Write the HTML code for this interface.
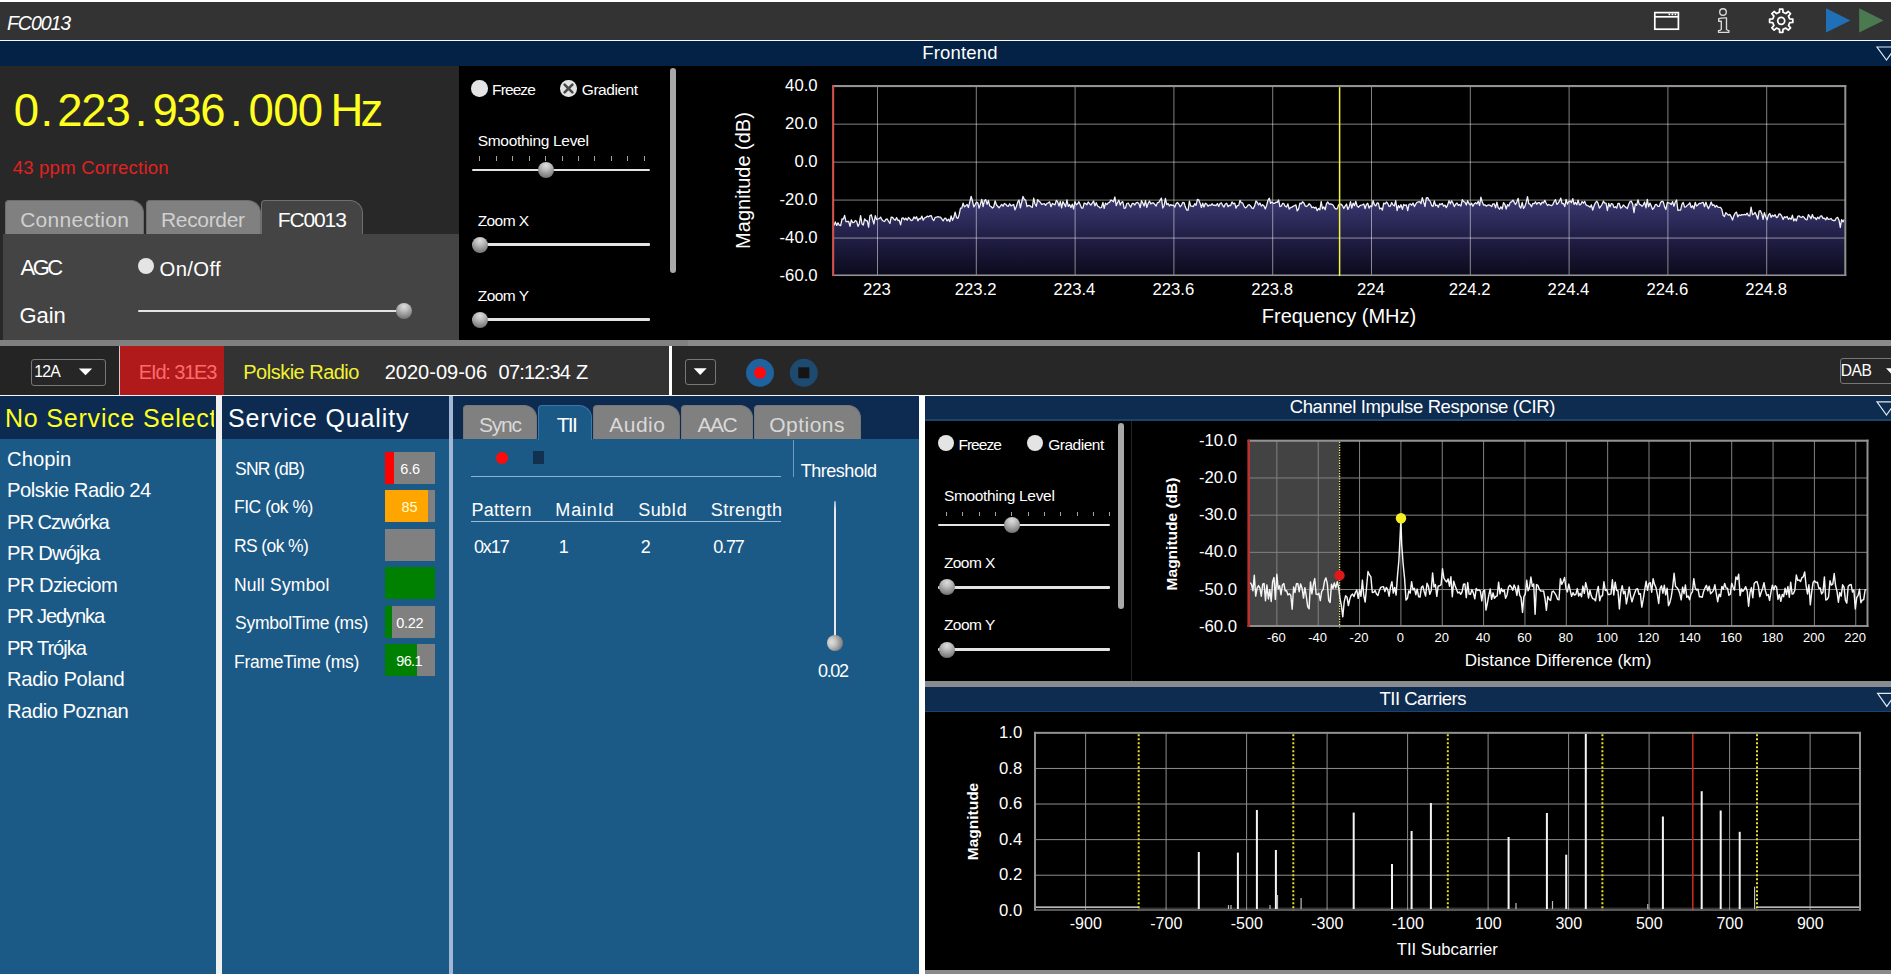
<!DOCTYPE html>
<html lang="en"><head><meta charset="utf-8"><title>FC0013</title>
<style>
html,body{margin:0;padding:0;background:#000;}
body{width:1891px;height:974px;position:relative;overflow:hidden;font-family:"Liberation Sans", sans-serif;color:#fff;}
.b{position:absolute;}
.t{position:absolute;white-space:pre;line-height:1;}
svg{position:absolute;left:0;top:0;overflow:visible;}
svg text{font-family:"Liberation Sans", sans-serif;fill:#fff;}
.trk{position:absolute;height:2.6px;background:#e4e4e4;border-radius:1px;}
.tk{position:absolute;width:1px;background:#a4a4a4;}
.thumb{position:absolute;width:16px;height:16px;border-radius:50%;background:radial-gradient(circle at 50% 22%,#dcdcdc 0%,#bdbdbd 30%,#8c8c8c 65%,#5a5a5a 100%);}
.radio{position:absolute;width:16.5px;height:16.5px;border-radius:50%;background:#e4e4e4;}
.sb{position:absolute;width:6.4px;border-radius:3.2px;background:#a8a8a8;}
.tab{position:absolute;box-sizing:border-box;border:1px solid #6c6c6c;border-bottom:none;border-radius:4px 13px 0 0;background:#808080;}
.bar{position:absolute;left:384.8px;width:50.4px;height:32px;background:#808080;}
.bar i{position:absolute;left:0;top:0;height:100%;display:block;}
.cb{position:absolute;box-sizing:border-box;border:1.3px solid #777;border-radius:3px;background:#262626;}
</style></head><body>
<!-- title bar -->
<div class="b" style="left:0;top:0;width:1891px;height:2px;background:#fff"></div>
<div class="b" style="left:0;top:2px;width:1891px;height:37.6px;background:#333"></div>
<div class="b" style="left:0;top:39.6px;width:1891px;height:1.5px;background:#f4f8ff"></div>
<div class="b" style="left:0;top:41px;width:1891px;height:25px;background:#042246"></div>
<!-- frontend left panel -->
<div class="b" style="left:0;top:66px;width:459px;height:274px;background:#282828"></div>
<div class="tab" style="left:5px;top:200px;width:139px;height:33.8px"></div>
<div class="tab" style="left:146px;top:200px;width:114.5px;height:33.8px"></div>
<div class="tab" style="left:261px;top:200px;width:102px;height:34.5px;background:#444;border-color:#707070"></div>
<div class="b" style="left:3px;top:233.6px;width:456px;height:106.4px;background:#444"></div>
<div class="b" style="left:262px;top:232px;width:100px;height:4px;background:#444"></div>
<div class="radio" style="left:138px;top:258.2px;width:16px;height:16px"></div>
<div class="trk" style="left:138px;top:309.7px;width:263.0px"></div><div class="thumb" style="left:396.0px;top:303.0px"></div>
<!-- frontend controls -->
<div class="radio" style="left:471.2px;top:80.2px"></div>
<div class="radio" style="left:560.2px;top:80.2px"></div>
<svg width="1891" height="974" viewBox="0 0 1891 974" style="pointer-events:none"><path d="M564.6 84.6 L572.4 92.4 M572.4 84.6 L564.6 92.4" stroke="#484848" stroke-width="2.6" stroke-linecap="round" fill="none"/></svg>
<div class="trk" style="left:471.5px;top:168.7px;width:178.7px"></div><div class="tk" style="left:479px;top:156.3px;height:5.0px"></div><div class="tk" style="left:496px;top:156.3px;height:5.0px"></div><div class="tk" style="left:512px;top:156.3px;height:5.0px"></div><div class="tk" style="left:529px;top:156.3px;height:5.0px"></div><div class="tk" style="left:545px;top:156.3px;height:5.0px"></div><div class="tk" style="left:562px;top:156.3px;height:5.0px"></div><div class="tk" style="left:578px;top:156.3px;height:5.0px"></div><div class="tk" style="left:594px;top:156.3px;height:5.0px"></div><div class="tk" style="left:611px;top:156.3px;height:5.0px"></div><div class="tk" style="left:627px;top:156.3px;height:5.0px"></div><div class="tk" style="left:644px;top:156.3px;height:5.0px"></div><div class="thumb" style="left:537.5px;top:162.0px"></div>
<div class="trk" style="left:471.5px;top:243.3px;width:178.7px"></div><div class="thumb" style="left:472.2px;top:236.6px"></div>
<div class="trk" style="left:471.5px;top:318.4px;width:178.7px"></div><div class="thumb" style="left:472.2px;top:311.7px"></div>
<div class="sb" style="left:670px;top:68px;height:205px"></div>
<!-- separators -->
<div class="b" style="left:0;top:339.8px;width:688px;height:6.4px;background:#808080"></div>
<div class="b" style="left:688px;top:339.8px;width:1203px;height:6.4px;background:#8a8a8a"></div>
<!-- status bar -->
<div class="b" style="left:0;top:346.2px;width:119.5px;height:49px;background:#242424"></div>
<div class="b" style="left:119px;top:346.2px;width:1.2px;height:49px;background:#e4c4c4"></div>
<div class="b" style="left:120.2px;top:346.2px;width:103.8px;height:49px;background:#b01a1a"></div>
<div class="b" style="left:224px;top:346.2px;width:445px;height:49px;background:#333"></div>
<div class="b" style="left:669px;top:346.2px;width:3px;height:49px;background:#fff"></div>
<div class="b" style="left:672px;top:346.2px;width:1219px;height:49px;background:#272727"></div>
<div class="b" style="left:0;top:394.8px;width:1891px;height:1.5px;background:#f4f8ff"></div>
<div class="cb" style="left:31px;top:359.4px;width:75px;height:26.4px;background:#262626"></div>
<div class="cb" style="left:685px;top:359px;width:30.8px;height:26.2px"></div>
<div class="cb" style="left:1839.6px;top:357.5px;width:70px;height:26.4px"></div>
<svg width="1891" height="974" viewBox="0 0 1891 974">
<path d="M78.8 368.4 h13.4 l-6.7 6.8z" fill="#fff"/>
<path d="M693.7 368.2 h13 l-6.5 6.8z" fill="#fff"/>
<path d="M1886 368.2 h13 l-6.5 6.8z" fill="#fff"/>
<circle cx="760" cy="372.8" r="14" fill="#1f62a0"/><circle cx="760" cy="372.8" r="6" fill="#ff0a0a"/>
<circle cx="803.8" cy="372.8" r="14" fill="#1e4a70"/><rect x="798.3" y="367.3" width="11" height="11" fill="#141414"/>
</svg>
<!-- bottom-left panels -->
<div class="b" style="left:0;top:396.3px;width:919px;height:577.7px;background:#1b5986"></div>
<div class="b" style="left:0;top:396.3px;width:919px;height:42.5px;background:#0d2b50"></div>
<div class="b" style="left:216.2px;top:396.3px;width:6px;height:577.7px;background:#f0f0f0"></div>
<div class="b" style="left:449px;top:396.3px;width:4.3px;height:577.7px;background:#a2b6d6"></div>
<div class="b" style="left:919px;top:396.3px;width:6px;height:577.7px;background:#fff"></div>
<div class="bar" style="top:452.0px"><i style="width:9.2px;background:#ff0000"></i></div>
<div class="bar" style="top:490.4px"><i style="width:43.6px;background:#ffa500"></i></div>
<div class="bar" style="top:528.9px"></div>
<div class="bar" style="top:567.3px"><i style="width:50.4px;background:#008000"></i></div>
<div class="bar" style="top:605.7px"><i style="width:7.0px;background:#008000"></i></div>
<div class="bar" style="top:644.0px"><i style="width:32.0px;background:#008000"></i></div>
<div class="tab" style="left:463px;top:405px;width:73.5px;height:33.8px;border-color:#777"></div>
<div class="tab" style="left:538px;top:405px;width:54px;height:34.5px;background:#1b5986;border-color:#3a78aa"></div>
<div class="tab" style="left:593px;top:405px;width:87px;height:33.8px;border-color:#777"></div>
<div class="tab" style="left:681px;top:405px;width:72px;height:33.8px;border-color:#777"></div>
<div class="tab" style="left:754px;top:405px;width:107px;height:33.8px;border-color:#777"></div>

<div class="b" style="left:495.9px;top:451.7px;width:12px;height:12px;border-radius:50%;background:#ff0a0a"></div>
<div class="b" style="left:532.9px;top:451px;width:10.8px;height:13px;background:#12304f"></div>
<div class="b" style="left:470.8px;top:476px;width:310.5px;height:1.2px;background:#8fb2d2"></div>
<div class="b" style="left:470.8px;top:520.8px;width:310.5px;height:1.2px;background:#9db9d4"></div>
<div class="b" style="left:792.6px;top:440px;width:1px;height:37px;background:#6f9cc4"></div>
<div class="b" style="left:833.5px;top:500.5px;width:2.4px;height:142px;background:linear-gradient(#8fb0cc,#e8e8e8 6%,#e8e8e8);border-radius:1.2px 1.2px 0 0"></div>
<div class="thumb" style="left:827.1px;top:634.8px;background:radial-gradient(circle at 28% 45%,#e0e0e0 0%,#c4c4c4 30%,#8c8c8c 68%,#5a5a5a 100%)"></div>
<!-- right panels -->
<div class="b" style="left:925px;top:396.3px;width:966px;height:24.5px;background:#0e2c50"></div>
<div class="b" style="left:925px;top:419.4px;width:966px;height:1.4px;background:#1a446e"></div>
<div class="b" style="left:925px;top:420.8px;width:966px;height:260.2px;background:#000"></div>
<div class="b" style="left:1131px;top:421px;width:1px;height:260px;background:#242424"></div>
<div class="b" style="left:925px;top:681px;width:966px;height:6.2px;background:#868c90"></div>
<div class="b" style="left:925px;top:687.2px;width:966px;height:25.2px;background:#0e2c50"></div>
<div class="b" style="left:925px;top:711px;width:966px;height:1.4px;background:#1a446e"></div>
<div class="b" style="left:925px;top:712.4px;width:966px;height:258px;background:#000"></div>
<div class="b" style="left:925px;top:970.3px;width:966px;height:4px;background:#8a8a8a"></div>
<div class="radio" style="left:938px;top:435.3px;width:16px;height:16px"></div>
<div class="radio" style="left:1027px;top:435.3px;width:16px;height:16px"></div>
<div class="trk" style="left:938.2px;top:523.5px;width:171.9px"></div><div class="tk" style="left:946px;top:511.7px;height:4.5px"></div><div class="tk" style="left:962px;top:511.7px;height:4.5px"></div><div class="tk" style="left:979px;top:511.7px;height:4.5px"></div><div class="tk" style="left:995px;top:511.7px;height:4.5px"></div><div class="tk" style="left:1011px;top:511.7px;height:4.5px"></div><div class="tk" style="left:1028px;top:511.7px;height:4.5px"></div><div class="tk" style="left:1044px;top:511.7px;height:4.5px"></div><div class="tk" style="left:1060px;top:511.7px;height:4.5px"></div><div class="tk" style="left:1077px;top:511.7px;height:4.5px"></div><div class="tk" style="left:1093px;top:511.7px;height:4.5px"></div><div class="tk" style="left:1109px;top:511.7px;height:4.5px"></div><div class="thumb" style="left:1003.9px;top:516.8px"></div>
<div class="trk" style="left:938.2px;top:586.0px;width:171.9px"></div><div class="thumb" style="left:938.6px;top:579.3px"></div>
<div class="trk" style="left:938.2px;top:648.2px;width:171.9px"></div><div class="thumb" style="left:938.6px;top:641.5px"></div>
<div class="sb" style="left:1117.7px;top:423px;height:186px"></div>
<!-- charts -->
<svg width="1891" height="974" viewBox="0 0 1891 974">
<g id="frontend-chart"><defs><linearGradient id="fg" x1="0" y1="198" x2="0" y2="276.0" gradientUnits="userSpaceOnUse"><stop offset="0" stop-color="#3b3972"/><stop offset="0.5" stop-color="#211f46"/><stop offset="1" stop-color="#0b0a1c"/></linearGradient></defs><polygon points="833.2,276.0 834.0,225.4 835.3,221.9 836.7,225.4 838.0,222.9 839.3,225.2 840.7,225.6 842.0,219.0 843.3,219.2 844.6,215.4 846.0,221.6 847.3,221.5 848.6,221.3 850.0,226.3 851.3,219.8 852.6,222.6 854.0,222.4 855.3,220.5 856.6,221.2 858.0,226.4 859.3,223.7 860.6,215.6 862.0,223.9 863.3,225.1 864.6,218.8 865.9,220.5 867.3,220.8 868.6,227.2 869.9,215.7 871.3,214.8 872.6,219.6 873.9,224.0 875.3,215.6 876.6,219.5 877.9,219.0 879.3,218.6 880.6,217.1 881.9,219.7 883.3,221.1 884.6,221.5 885.9,219.3 887.2,219.0 888.6,221.5 889.9,223.5 891.2,217.2 892.6,217.5 893.9,219.2 895.2,220.2 896.6,217.6 897.9,220.5 899.2,220.2 900.6,224.9 901.9,218.1 903.2,217.8 904.5,219.8 905.9,218.2 907.2,220.2 908.5,217.4 909.9,218.9 911.2,220.5 912.5,220.2 913.9,216.9 915.2,218.5 916.5,216.8 917.9,220.8 919.2,218.6 920.5,219.0 921.9,216.1 923.2,220.2 924.5,218.0 925.8,217.4 927.2,216.2 928.5,216.8 929.8,215.9 931.2,215.6 932.5,219.1 933.8,220.6 935.2,217.3 936.5,217.1 937.8,216.6 939.2,217.1 940.5,217.2 941.8,219.0 943.1,220.9 944.5,218.5 945.8,218.2 947.1,220.9 948.5,219.2 949.8,221.6 951.1,216.0 952.5,220.3 953.8,217.8 955.1,212.2 956.5,217.4 957.8,218.4 959.1,214.9 960.5,208.1 961.8,208.2 963.1,203.1 964.4,206.8 965.8,205.8 967.1,204.5 968.4,207.5 969.8,201.9 971.1,196.3 972.4,200.7 973.8,206.8 975.1,204.8 976.4,202.2 977.8,202.9 979.1,208.1 980.4,204.1 981.8,199.3 983.1,206.7 984.4,200.8 985.7,199.6 987.1,204.3 988.4,200.5 989.7,205.9 991.1,206.5 992.4,208.1 993.7,206.9 995.1,200.8 996.4,204.7 997.7,206.2 999.1,207.8 1000.4,206.2 1001.7,204.4 1003.0,206.2 1004.4,203.5 1005.7,204.3 1007.0,205.8 1008.4,206.3 1009.7,203.8 1011.0,205.8 1012.4,205.1 1013.7,204.5 1015.0,209.8 1016.4,206.5 1017.7,202.1 1019.0,200.0 1020.4,207.8 1021.7,202.0 1023.0,196.5 1024.3,199.2 1025.7,200.3 1027.0,206.5 1028.3,205.4 1029.7,205.6 1031.0,206.7 1032.3,207.4 1033.7,198.1 1035.0,204.0 1036.3,206.3 1037.7,199.7 1039.0,201.2 1040.3,202.3 1041.7,204.3 1043.0,204.0 1044.3,203.6 1045.6,205.3 1047.0,203.3 1048.3,202.8 1049.6,201.9 1051.0,206.7 1052.3,203.4 1053.6,204.2 1055.0,204.9 1056.3,200.4 1057.6,201.7 1059.0,206.1 1060.3,201.4 1061.6,207.8 1062.9,201.7 1064.3,204.1 1065.6,206.7 1066.9,200.0 1068.3,206.4 1069.6,204.5 1070.9,207.6 1072.3,204.2 1073.6,209.0 1074.9,201.6 1076.3,204.8 1077.6,203.8 1078.9,201.7 1080.3,205.1 1081.6,208.1 1082.9,208.2 1084.2,203.0 1085.6,203.5 1086.9,204.8 1088.2,202.0 1089.6,203.7 1090.9,205.1 1092.2,203.1 1093.6,201.0 1094.9,205.9 1096.2,202.7 1097.6,206.0 1098.9,206.7 1100.2,207.9 1101.5,207.5 1102.9,202.5 1104.2,208.4 1105.5,203.1 1106.9,204.6 1108.2,202.8 1109.5,202.4 1110.9,200.0 1112.2,200.8 1113.5,201.8 1114.9,197.0 1116.2,205.7 1117.5,202.5 1118.9,200.3 1120.2,205.0 1121.5,202.3 1122.8,201.7 1124.2,208.4 1125.5,208.0 1126.8,203.5 1128.2,203.0 1129.5,205.3 1130.8,207.0 1132.2,203.5 1133.5,203.5 1134.8,205.0 1136.2,202.9 1137.5,202.4 1138.8,203.4 1140.2,207.7 1141.5,200.7 1142.8,203.0 1144.1,206.0 1145.5,200.7 1146.8,207.3 1148.1,203.5 1149.5,201.1 1150.8,203.9 1152.1,203.0 1153.5,202.8 1154.8,204.5 1156.1,206.0 1157.5,202.6 1158.8,202.3 1160.1,200.1 1161.4,198.1 1162.8,208.0 1164.1,205.7 1165.4,198.5 1166.8,204.7 1168.1,203.5 1169.4,205.9 1170.8,204.6 1172.1,205.4 1173.4,205.1 1174.8,207.1 1176.1,203.8 1177.4,202.5 1178.8,204.0 1180.1,206.8 1181.4,205.4 1182.7,202.5 1184.1,202.7 1185.4,207.1 1186.7,210.1 1188.1,210.1 1189.4,201.2 1190.7,206.1 1192.1,206.2 1193.4,206.5 1194.7,203.7 1196.1,205.2 1197.4,199.3 1198.7,199.8 1200.1,203.2 1201.4,207.5 1202.7,203.2 1204.0,207.0 1205.4,203.2 1206.7,204.0 1208.0,206.2 1209.4,205.0 1210.7,205.5 1212.0,203.8 1213.4,205.4 1214.7,205.1 1216.0,205.6 1217.4,203.5 1218.7,206.4 1220.0,203.5 1221.3,202.8 1222.7,205.5 1224.0,207.1 1225.3,204.0 1226.7,203.3 1228.0,206.7 1229.3,205.3 1230.7,205.5 1232.0,201.9 1233.3,203.8 1234.7,203.1 1236.0,208.2 1237.3,205.6 1238.7,205.4 1240.0,200.4 1241.3,202.7 1242.6,203.0 1244.0,206.1 1245.3,207.9 1246.6,207.2 1248.0,205.2 1249.3,204.7 1250.6,205.9 1252.0,208.2 1253.3,208.5 1254.6,205.9 1256.0,201.0 1257.3,202.5 1258.6,204.9 1259.9,203.0 1261.3,206.1 1262.6,204.7 1263.9,205.8 1265.3,208.9 1266.6,205.5 1267.9,200.5 1269.3,198.2 1270.6,203.4 1271.9,201.9 1273.3,203.4 1274.6,203.3 1275.9,202.2 1277.3,202.4 1278.6,200.0 1279.9,206.5 1281.2,206.2 1282.6,203.5 1283.9,203.7 1285.2,206.2 1286.6,207.0 1287.9,203.8 1289.2,209.0 1290.6,207.6 1291.9,207.1 1293.2,206.2 1294.6,205.6 1295.9,204.9 1297.2,210.9 1298.6,208.8 1299.9,203.1 1301.2,203.9 1302.5,201.8 1303.9,202.9 1305.2,205.9 1306.5,206.5 1307.9,205.5 1309.2,203.7 1310.5,204.9 1311.9,207.7 1313.2,207.0 1314.5,208.1 1315.9,207.2 1317.2,210.7 1318.5,208.5 1319.8,209.9 1321.2,201.5 1322.5,208.6 1323.8,206.9 1325.2,209.7 1326.5,203.7 1327.8,202.0 1329.2,204.1 1330.5,203.8 1331.8,204.3 1333.2,205.3 1334.5,207.8 1335.8,209.0 1337.2,208.9 1338.5,205.1 1339.8,204.1 1341.1,204.2 1342.5,205.8 1343.8,208.5 1345.1,206.1 1346.5,204.0 1347.8,209.3 1349.1,207.2 1350.5,201.6 1351.8,208.1 1353.1,203.1 1354.5,205.6 1355.8,201.3 1357.1,206.0 1358.5,207.2 1359.8,205.7 1361.1,205.2 1362.4,204.8 1363.8,204.0 1365.1,208.6 1366.4,204.5 1367.8,203.3 1369.1,208.2 1370.4,205.9 1371.8,206.6 1373.1,200.7 1374.4,204.7 1375.8,205.9 1377.1,203.0 1378.4,203.2 1379.7,208.8 1381.1,208.0 1382.4,210.1 1383.7,203.1 1385.1,203.9 1386.4,202.0 1387.7,203.5 1389.1,206.5 1390.4,206.1 1391.7,202.6 1393.1,205.0 1394.4,205.9 1395.7,200.7 1397.1,210.5 1398.4,205.5 1399.7,207.6 1401.0,204.6 1402.4,209.4 1403.7,204.4 1405.0,205.5 1406.4,204.9 1407.7,210.7 1409.0,204.3 1410.4,203.9 1411.7,205.3 1413.0,203.0 1414.4,206.6 1415.7,204.2 1417.0,202.3 1418.4,201.8 1419.7,201.6 1421.0,203.6 1422.3,197.6 1423.7,202.1 1425.0,206.6 1426.3,197.8 1427.7,197.6 1429.0,200.1 1430.3,201.4 1431.7,205.6 1433.0,206.4 1434.3,201.0 1435.7,205.7 1437.0,205.0 1438.3,207.3 1439.6,203.8 1441.0,204.6 1442.3,203.4 1443.6,206.2 1445.0,205.1 1446.3,207.6 1447.6,205.1 1449.0,200.7 1450.3,203.8 1451.6,200.8 1453.0,203.2 1454.3,206.6 1455.6,204.3 1457.0,203.0 1458.3,205.4 1459.6,204.6 1460.9,206.0 1462.3,199.6 1463.6,201.5 1464.9,202.1 1466.3,205.1 1467.6,200.7 1468.9,203.5 1470.3,205.0 1471.6,203.2 1472.9,206.3 1474.3,203.7 1475.6,202.7 1476.9,203.9 1478.2,201.3 1479.6,205.5 1480.9,197.2 1482.2,201.8 1483.6,205.0 1484.9,204.8 1486.2,206.1 1487.6,205.2 1488.9,204.8 1490.2,205.3 1491.6,206.6 1492.9,203.9 1494.2,203.8 1495.6,207.9 1496.9,202.1 1498.2,207.6 1499.5,209.2 1500.9,206.8 1502.2,209.0 1503.5,202.6 1504.9,204.5 1506.2,209.0 1507.5,204.7 1508.9,206.0 1510.2,202.4 1511.5,201.9 1512.9,200.1 1514.2,202.2 1515.5,204.5 1516.9,201.7 1518.2,198.3 1519.5,206.3 1520.8,208.0 1522.2,202.5 1523.5,208.4 1524.8,206.6 1526.2,202.2 1527.5,196.6 1528.8,203.6 1530.2,204.4 1531.5,206.7 1532.8,203.4 1534.2,203.6 1535.5,201.8 1536.8,204.2 1538.1,202.7 1539.5,202.6 1540.8,204.8 1542.1,202.1 1543.5,202.9 1544.8,200.4 1546.1,203.0 1547.5,205.5 1548.8,204.5 1550.1,205.2 1551.5,205.7 1552.8,204.6 1554.1,201.6 1555.5,199.6 1556.8,204.4 1558.1,203.2 1559.4,201.2 1560.8,198.1 1562.1,203.6 1563.4,203.4 1564.8,206.6 1566.1,199.4 1567.4,204.0 1568.8,201.6 1570.1,201.0 1571.4,202.7 1572.8,198.6 1574.1,204.4 1575.4,202.3 1576.8,204.7 1578.1,200.2 1579.4,204.9 1580.7,204.6 1582.1,201.6 1583.4,203.2 1584.7,201.4 1586.1,204.9 1587.4,205.6 1588.7,206.1 1590.1,207.2 1591.4,204.9 1592.7,210.1 1594.1,205.8 1595.4,202.8 1596.7,201.2 1598.0,203.1 1599.4,208.2 1600.7,206.5 1602.0,204.5 1603.4,201.2 1604.7,203.1 1606.0,203.1 1607.4,210.5 1608.7,203.5 1610.0,206.8 1611.4,203.6 1612.7,204.0 1614.0,207.6 1615.4,206.7 1616.7,208.0 1618.0,203.3 1619.3,203.5 1620.7,208.2 1622.0,207.3 1623.3,205.0 1624.7,206.3 1626.0,207.4 1627.3,208.5 1628.7,204.3 1630.0,201.7 1631.3,201.2 1632.7,204.1 1634.0,212.7 1635.3,204.0 1636.6,205.3 1638.0,199.9 1639.3,204.3 1640.6,204.8 1642.0,206.4 1643.3,204.8 1644.6,202.1 1646.0,207.8 1647.3,199.4 1648.6,206.7 1650.0,203.1 1651.3,206.1 1652.6,209.4 1654.0,207.8 1655.3,204.7 1656.6,204.5 1657.9,206.4 1659.3,206.4 1660.6,202.4 1661.9,201.2 1663.3,201.9 1664.6,206.9 1665.9,209.5 1667.3,202.3 1668.6,202.9 1669.9,203.1 1671.3,204.5 1672.6,201.6 1673.9,206.2 1675.3,202.0 1676.6,200.0 1677.9,210.4 1679.2,210.1 1680.6,210.2 1681.9,204.4 1683.2,202.4 1684.6,207.1 1685.9,206.9 1687.2,205.3 1688.6,204.5 1689.9,202.7 1691.2,207.7 1692.6,205.8 1693.9,208.8 1695.2,202.3 1696.5,206.0 1697.9,204.9 1699.2,203.3 1700.5,203.5 1701.9,202.7 1703.2,202.4 1704.5,206.7 1705.9,202.1 1707.2,206.1 1708.5,208.6 1709.9,205.4 1711.2,202.0 1712.5,205.4 1713.9,204.8 1715.2,207.1 1716.5,205.5 1717.8,207.2 1719.2,207.4 1720.5,207.3 1721.8,209.4 1723.2,215.5 1724.5,216.5 1725.8,212.6 1727.2,214.0 1728.5,215.2 1729.8,214.4 1731.2,216.8 1732.5,220.0 1733.8,215.9 1735.2,213.0 1736.5,212.1 1737.8,216.8 1739.1,214.9 1740.5,215.5 1741.8,214.6 1743.1,214.8 1744.5,214.4 1745.8,214.9 1747.1,213.1 1748.5,215.6 1749.8,216.0 1751.1,207.2 1752.5,214.6 1753.8,214.0 1755.1,212.5 1756.4,215.3 1757.8,219.2 1759.1,211.1 1760.4,210.7 1761.8,213.6 1763.1,219.3 1764.4,212.6 1765.8,216.9 1767.1,219.8 1768.4,215.1 1769.8,213.4 1771.1,217.3 1772.4,215.2 1773.8,216.2 1775.1,214.7 1776.4,217.6 1777.7,216.9 1779.1,213.8 1780.4,214.1 1781.7,216.1 1783.1,219.5 1784.4,216.8 1785.7,217.6 1787.1,216.5 1788.4,219.3 1789.7,218.0 1791.1,219.4 1792.4,215.2 1793.7,220.8 1795.0,218.8 1796.4,220.9 1797.7,216.4 1799.0,215.8 1800.4,217.2 1801.7,217.3 1803.0,216.4 1804.4,217.8 1805.7,219.5 1807.0,219.9 1808.4,214.7 1809.7,216.4 1811.0,218.7 1812.4,214.5 1813.7,217.9 1815.0,217.7 1816.3,219.6 1817.7,217.1 1819.0,218.7 1820.3,216.2 1821.7,215.8 1823.0,218.4 1824.3,218.2 1825.7,219.9 1827.0,217.3 1828.3,219.3 1829.7,219.1 1831.0,218.5 1832.3,220.2 1833.7,220.5 1835.0,220.5 1836.3,218.0 1837.6,217.4 1839.0,220.2 1840.3,227.5 1841.6,219.7 1843.0,221.9 1844.3,219.6 1845.3,276.0" fill="url(#fg)"/><rect x="877.00" y="86.20" width="1.0" height="189.80" fill="rgba(255,255,255,0.50)"/><rect x="975.80" y="86.20" width="1.0" height="189.80" fill="rgba(255,255,255,0.50)"/><rect x="1074.60" y="86.20" width="1.0" height="189.80" fill="rgba(255,255,255,0.50)"/><rect x="1173.40" y="86.20" width="1.0" height="189.80" fill="rgba(255,255,255,0.50)"/><rect x="1272.20" y="86.20" width="1.0" height="189.80" fill="rgba(255,255,255,0.50)"/><rect x="1371.00" y="86.20" width="1.0" height="189.80" fill="rgba(255,255,255,0.50)"/><rect x="1469.80" y="86.20" width="1.0" height="189.80" fill="rgba(255,255,255,0.50)"/><rect x="1568.60" y="86.20" width="1.0" height="189.80" fill="rgba(255,255,255,0.50)"/><rect x="1667.40" y="86.20" width="1.0" height="189.80" fill="rgba(255,255,255,0.50)"/><rect x="1766.20" y="86.20" width="1.0" height="189.80" fill="rgba(255,255,255,0.50)"/><rect x="833.20" y="123.66" width="1012.10" height="1.0" fill="rgba(255,255,255,0.50)"/><rect x="833.20" y="161.62" width="1012.10" height="1.0" fill="rgba(255,255,255,0.50)"/><rect x="833.20" y="199.58" width="1012.10" height="1.0" fill="rgba(255,255,255,0.50)"/><rect x="833.20" y="237.54" width="1012.10" height="1.0" fill="rgba(255,255,255,0.50)"/><polyline points="834.0,225.4 835.3,221.9 836.7,225.4 838.0,222.9 839.3,225.2 840.7,225.6 842.0,219.0 843.3,219.2 844.6,215.4 846.0,221.6 847.3,221.5 848.6,221.3 850.0,226.3 851.3,219.8 852.6,222.6 854.0,222.4 855.3,220.5 856.6,221.2 858.0,226.4 859.3,223.7 860.6,215.6 862.0,223.9 863.3,225.1 864.6,218.8 865.9,220.5 867.3,220.8 868.6,227.2 869.9,215.7 871.3,214.8 872.6,219.6 873.9,224.0 875.3,215.6 876.6,219.5 877.9,219.0 879.3,218.6 880.6,217.1 881.9,219.7 883.3,221.1 884.6,221.5 885.9,219.3 887.2,219.0 888.6,221.5 889.9,223.5 891.2,217.2 892.6,217.5 893.9,219.2 895.2,220.2 896.6,217.6 897.9,220.5 899.2,220.2 900.6,224.9 901.9,218.1 903.2,217.8 904.5,219.8 905.9,218.2 907.2,220.2 908.5,217.4 909.9,218.9 911.2,220.5 912.5,220.2 913.9,216.9 915.2,218.5 916.5,216.8 917.9,220.8 919.2,218.6 920.5,219.0 921.9,216.1 923.2,220.2 924.5,218.0 925.8,217.4 927.2,216.2 928.5,216.8 929.8,215.9 931.2,215.6 932.5,219.1 933.8,220.6 935.2,217.3 936.5,217.1 937.8,216.6 939.2,217.1 940.5,217.2 941.8,219.0 943.1,220.9 944.5,218.5 945.8,218.2 947.1,220.9 948.5,219.2 949.8,221.6 951.1,216.0 952.5,220.3 953.8,217.8 955.1,212.2 956.5,217.4 957.8,218.4 959.1,214.9 960.5,208.1 961.8,208.2 963.1,203.1 964.4,206.8 965.8,205.8 967.1,204.5 968.4,207.5 969.8,201.9 971.1,196.3 972.4,200.7 973.8,206.8 975.1,204.8 976.4,202.2 977.8,202.9 979.1,208.1 980.4,204.1 981.8,199.3 983.1,206.7 984.4,200.8 985.7,199.6 987.1,204.3 988.4,200.5 989.7,205.9 991.1,206.5 992.4,208.1 993.7,206.9 995.1,200.8 996.4,204.7 997.7,206.2 999.1,207.8 1000.4,206.2 1001.7,204.4 1003.0,206.2 1004.4,203.5 1005.7,204.3 1007.0,205.8 1008.4,206.3 1009.7,203.8 1011.0,205.8 1012.4,205.1 1013.7,204.5 1015.0,209.8 1016.4,206.5 1017.7,202.1 1019.0,200.0 1020.4,207.8 1021.7,202.0 1023.0,196.5 1024.3,199.2 1025.7,200.3 1027.0,206.5 1028.3,205.4 1029.7,205.6 1031.0,206.7 1032.3,207.4 1033.7,198.1 1035.0,204.0 1036.3,206.3 1037.7,199.7 1039.0,201.2 1040.3,202.3 1041.7,204.3 1043.0,204.0 1044.3,203.6 1045.6,205.3 1047.0,203.3 1048.3,202.8 1049.6,201.9 1051.0,206.7 1052.3,203.4 1053.6,204.2 1055.0,204.9 1056.3,200.4 1057.6,201.7 1059.0,206.1 1060.3,201.4 1061.6,207.8 1062.9,201.7 1064.3,204.1 1065.6,206.7 1066.9,200.0 1068.3,206.4 1069.6,204.5 1070.9,207.6 1072.3,204.2 1073.6,209.0 1074.9,201.6 1076.3,204.8 1077.6,203.8 1078.9,201.7 1080.3,205.1 1081.6,208.1 1082.9,208.2 1084.2,203.0 1085.6,203.5 1086.9,204.8 1088.2,202.0 1089.6,203.7 1090.9,205.1 1092.2,203.1 1093.6,201.0 1094.9,205.9 1096.2,202.7 1097.6,206.0 1098.9,206.7 1100.2,207.9 1101.5,207.5 1102.9,202.5 1104.2,208.4 1105.5,203.1 1106.9,204.6 1108.2,202.8 1109.5,202.4 1110.9,200.0 1112.2,200.8 1113.5,201.8 1114.9,197.0 1116.2,205.7 1117.5,202.5 1118.9,200.3 1120.2,205.0 1121.5,202.3 1122.8,201.7 1124.2,208.4 1125.5,208.0 1126.8,203.5 1128.2,203.0 1129.5,205.3 1130.8,207.0 1132.2,203.5 1133.5,203.5 1134.8,205.0 1136.2,202.9 1137.5,202.4 1138.8,203.4 1140.2,207.7 1141.5,200.7 1142.8,203.0 1144.1,206.0 1145.5,200.7 1146.8,207.3 1148.1,203.5 1149.5,201.1 1150.8,203.9 1152.1,203.0 1153.5,202.8 1154.8,204.5 1156.1,206.0 1157.5,202.6 1158.8,202.3 1160.1,200.1 1161.4,198.1 1162.8,208.0 1164.1,205.7 1165.4,198.5 1166.8,204.7 1168.1,203.5 1169.4,205.9 1170.8,204.6 1172.1,205.4 1173.4,205.1 1174.8,207.1 1176.1,203.8 1177.4,202.5 1178.8,204.0 1180.1,206.8 1181.4,205.4 1182.7,202.5 1184.1,202.7 1185.4,207.1 1186.7,210.1 1188.1,210.1 1189.4,201.2 1190.7,206.1 1192.1,206.2 1193.4,206.5 1194.7,203.7 1196.1,205.2 1197.4,199.3 1198.7,199.8 1200.1,203.2 1201.4,207.5 1202.7,203.2 1204.0,207.0 1205.4,203.2 1206.7,204.0 1208.0,206.2 1209.4,205.0 1210.7,205.5 1212.0,203.8 1213.4,205.4 1214.7,205.1 1216.0,205.6 1217.4,203.5 1218.7,206.4 1220.0,203.5 1221.3,202.8 1222.7,205.5 1224.0,207.1 1225.3,204.0 1226.7,203.3 1228.0,206.7 1229.3,205.3 1230.7,205.5 1232.0,201.9 1233.3,203.8 1234.7,203.1 1236.0,208.2 1237.3,205.6 1238.7,205.4 1240.0,200.4 1241.3,202.7 1242.6,203.0 1244.0,206.1 1245.3,207.9 1246.6,207.2 1248.0,205.2 1249.3,204.7 1250.6,205.9 1252.0,208.2 1253.3,208.5 1254.6,205.9 1256.0,201.0 1257.3,202.5 1258.6,204.9 1259.9,203.0 1261.3,206.1 1262.6,204.7 1263.9,205.8 1265.3,208.9 1266.6,205.5 1267.9,200.5 1269.3,198.2 1270.6,203.4 1271.9,201.9 1273.3,203.4 1274.6,203.3 1275.9,202.2 1277.3,202.4 1278.6,200.0 1279.9,206.5 1281.2,206.2 1282.6,203.5 1283.9,203.7 1285.2,206.2 1286.6,207.0 1287.9,203.8 1289.2,209.0 1290.6,207.6 1291.9,207.1 1293.2,206.2 1294.6,205.6 1295.9,204.9 1297.2,210.9 1298.6,208.8 1299.9,203.1 1301.2,203.9 1302.5,201.8 1303.9,202.9 1305.2,205.9 1306.5,206.5 1307.9,205.5 1309.2,203.7 1310.5,204.9 1311.9,207.7 1313.2,207.0 1314.5,208.1 1315.9,207.2 1317.2,210.7 1318.5,208.5 1319.8,209.9 1321.2,201.5 1322.5,208.6 1323.8,206.9 1325.2,209.7 1326.5,203.7 1327.8,202.0 1329.2,204.1 1330.5,203.8 1331.8,204.3 1333.2,205.3 1334.5,207.8 1335.8,209.0 1337.2,208.9 1338.5,205.1 1339.8,204.1 1341.1,204.2 1342.5,205.8 1343.8,208.5 1345.1,206.1 1346.5,204.0 1347.8,209.3 1349.1,207.2 1350.5,201.6 1351.8,208.1 1353.1,203.1 1354.5,205.6 1355.8,201.3 1357.1,206.0 1358.5,207.2 1359.8,205.7 1361.1,205.2 1362.4,204.8 1363.8,204.0 1365.1,208.6 1366.4,204.5 1367.8,203.3 1369.1,208.2 1370.4,205.9 1371.8,206.6 1373.1,200.7 1374.4,204.7 1375.8,205.9 1377.1,203.0 1378.4,203.2 1379.7,208.8 1381.1,208.0 1382.4,210.1 1383.7,203.1 1385.1,203.9 1386.4,202.0 1387.7,203.5 1389.1,206.5 1390.4,206.1 1391.7,202.6 1393.1,205.0 1394.4,205.9 1395.7,200.7 1397.1,210.5 1398.4,205.5 1399.7,207.6 1401.0,204.6 1402.4,209.4 1403.7,204.4 1405.0,205.5 1406.4,204.9 1407.7,210.7 1409.0,204.3 1410.4,203.9 1411.7,205.3 1413.0,203.0 1414.4,206.6 1415.7,204.2 1417.0,202.3 1418.4,201.8 1419.7,201.6 1421.0,203.6 1422.3,197.6 1423.7,202.1 1425.0,206.6 1426.3,197.8 1427.7,197.6 1429.0,200.1 1430.3,201.4 1431.7,205.6 1433.0,206.4 1434.3,201.0 1435.7,205.7 1437.0,205.0 1438.3,207.3 1439.6,203.8 1441.0,204.6 1442.3,203.4 1443.6,206.2 1445.0,205.1 1446.3,207.6 1447.6,205.1 1449.0,200.7 1450.3,203.8 1451.6,200.8 1453.0,203.2 1454.3,206.6 1455.6,204.3 1457.0,203.0 1458.3,205.4 1459.6,204.6 1460.9,206.0 1462.3,199.6 1463.6,201.5 1464.9,202.1 1466.3,205.1 1467.6,200.7 1468.9,203.5 1470.3,205.0 1471.6,203.2 1472.9,206.3 1474.3,203.7 1475.6,202.7 1476.9,203.9 1478.2,201.3 1479.6,205.5 1480.9,197.2 1482.2,201.8 1483.6,205.0 1484.9,204.8 1486.2,206.1 1487.6,205.2 1488.9,204.8 1490.2,205.3 1491.6,206.6 1492.9,203.9 1494.2,203.8 1495.6,207.9 1496.9,202.1 1498.2,207.6 1499.5,209.2 1500.9,206.8 1502.2,209.0 1503.5,202.6 1504.9,204.5 1506.2,209.0 1507.5,204.7 1508.9,206.0 1510.2,202.4 1511.5,201.9 1512.9,200.1 1514.2,202.2 1515.5,204.5 1516.9,201.7 1518.2,198.3 1519.5,206.3 1520.8,208.0 1522.2,202.5 1523.5,208.4 1524.8,206.6 1526.2,202.2 1527.5,196.6 1528.8,203.6 1530.2,204.4 1531.5,206.7 1532.8,203.4 1534.2,203.6 1535.5,201.8 1536.8,204.2 1538.1,202.7 1539.5,202.6 1540.8,204.8 1542.1,202.1 1543.5,202.9 1544.8,200.4 1546.1,203.0 1547.5,205.5 1548.8,204.5 1550.1,205.2 1551.5,205.7 1552.8,204.6 1554.1,201.6 1555.5,199.6 1556.8,204.4 1558.1,203.2 1559.4,201.2 1560.8,198.1 1562.1,203.6 1563.4,203.4 1564.8,206.6 1566.1,199.4 1567.4,204.0 1568.8,201.6 1570.1,201.0 1571.4,202.7 1572.8,198.6 1574.1,204.4 1575.4,202.3 1576.8,204.7 1578.1,200.2 1579.4,204.9 1580.7,204.6 1582.1,201.6 1583.4,203.2 1584.7,201.4 1586.1,204.9 1587.4,205.6 1588.7,206.1 1590.1,207.2 1591.4,204.9 1592.7,210.1 1594.1,205.8 1595.4,202.8 1596.7,201.2 1598.0,203.1 1599.4,208.2 1600.7,206.5 1602.0,204.5 1603.4,201.2 1604.7,203.1 1606.0,203.1 1607.4,210.5 1608.7,203.5 1610.0,206.8 1611.4,203.6 1612.7,204.0 1614.0,207.6 1615.4,206.7 1616.7,208.0 1618.0,203.3 1619.3,203.5 1620.7,208.2 1622.0,207.3 1623.3,205.0 1624.7,206.3 1626.0,207.4 1627.3,208.5 1628.7,204.3 1630.0,201.7 1631.3,201.2 1632.7,204.1 1634.0,212.7 1635.3,204.0 1636.6,205.3 1638.0,199.9 1639.3,204.3 1640.6,204.8 1642.0,206.4 1643.3,204.8 1644.6,202.1 1646.0,207.8 1647.3,199.4 1648.6,206.7 1650.0,203.1 1651.3,206.1 1652.6,209.4 1654.0,207.8 1655.3,204.7 1656.6,204.5 1657.9,206.4 1659.3,206.4 1660.6,202.4 1661.9,201.2 1663.3,201.9 1664.6,206.9 1665.9,209.5 1667.3,202.3 1668.6,202.9 1669.9,203.1 1671.3,204.5 1672.6,201.6 1673.9,206.2 1675.3,202.0 1676.6,200.0 1677.9,210.4 1679.2,210.1 1680.6,210.2 1681.9,204.4 1683.2,202.4 1684.6,207.1 1685.9,206.9 1687.2,205.3 1688.6,204.5 1689.9,202.7 1691.2,207.7 1692.6,205.8 1693.9,208.8 1695.2,202.3 1696.5,206.0 1697.9,204.9 1699.2,203.3 1700.5,203.5 1701.9,202.7 1703.2,202.4 1704.5,206.7 1705.9,202.1 1707.2,206.1 1708.5,208.6 1709.9,205.4 1711.2,202.0 1712.5,205.4 1713.9,204.8 1715.2,207.1 1716.5,205.5 1717.8,207.2 1719.2,207.4 1720.5,207.3 1721.8,209.4 1723.2,215.5 1724.5,216.5 1725.8,212.6 1727.2,214.0 1728.5,215.2 1729.8,214.4 1731.2,216.8 1732.5,220.0 1733.8,215.9 1735.2,213.0 1736.5,212.1 1737.8,216.8 1739.1,214.9 1740.5,215.5 1741.8,214.6 1743.1,214.8 1744.5,214.4 1745.8,214.9 1747.1,213.1 1748.5,215.6 1749.8,216.0 1751.1,207.2 1752.5,214.6 1753.8,214.0 1755.1,212.5 1756.4,215.3 1757.8,219.2 1759.1,211.1 1760.4,210.7 1761.8,213.6 1763.1,219.3 1764.4,212.6 1765.8,216.9 1767.1,219.8 1768.4,215.1 1769.8,213.4 1771.1,217.3 1772.4,215.2 1773.8,216.2 1775.1,214.7 1776.4,217.6 1777.7,216.9 1779.1,213.8 1780.4,214.1 1781.7,216.1 1783.1,219.5 1784.4,216.8 1785.7,217.6 1787.1,216.5 1788.4,219.3 1789.7,218.0 1791.1,219.4 1792.4,215.2 1793.7,220.8 1795.0,218.8 1796.4,220.9 1797.7,216.4 1799.0,215.8 1800.4,217.2 1801.7,217.3 1803.0,216.4 1804.4,217.8 1805.7,219.5 1807.0,219.9 1808.4,214.7 1809.7,216.4 1811.0,218.7 1812.4,214.5 1813.7,217.9 1815.0,217.7 1816.3,219.6 1817.7,217.1 1819.0,218.7 1820.3,216.2 1821.7,215.8 1823.0,218.4 1824.3,218.2 1825.7,219.9 1827.0,217.3 1828.3,219.3 1829.7,219.1 1831.0,218.5 1832.3,220.2 1833.7,220.5 1835.0,220.5 1836.3,218.0 1837.6,217.4 1839.0,220.2 1840.3,227.5 1841.6,219.7 1843.0,221.9 1844.3,219.6" fill="none" stroke="#f0f0f6" stroke-width="1.3" stroke-linejoin="round"/><rect x="832.20" y="85.00" width="1014.10" height="2.1" fill="#929292"/><rect x="832.20" y="274.45" width="1014.10" height="1.6" fill="#929292"/><rect x="1844.30" y="85.00" width="2.0" height="191.00" fill="#929292"/><rect x="832.10" y="85.00" width="2.1" height="191.00" fill="#d4524c"/><rect x="1338.85" y="87.20" width="1.5" height="188.80" fill="#f4f43a"/><text x="817.6" y="91.0" text-anchor="end" font-size="16.7">40.0</text><text x="817.6" y="129.0" text-anchor="end" font-size="16.7">20.0</text><text x="817.6" y="166.9" text-anchor="end" font-size="16.7">0.0</text><text x="817.6" y="204.9" text-anchor="end" font-size="16.7">-20.0</text><text x="817.6" y="242.8" text-anchor="end" font-size="16.7">-40.0</text><text x="817.6" y="280.8" text-anchor="end" font-size="16.7">-60.0</text><text x="876.9" y="295.2" text-anchor="middle" font-size="16.7">223</text><text x="975.7" y="295.2" text-anchor="middle" font-size="16.7">223.2</text><text x="1074.5" y="295.2" text-anchor="middle" font-size="16.7">223.4</text><text x="1173.3" y="295.2" text-anchor="middle" font-size="16.7">223.6</text><text x="1272.1" y="295.2" text-anchor="middle" font-size="16.7">223.8</text><text x="1370.9" y="295.2" text-anchor="middle" font-size="16.7">224</text><text x="1469.7" y="295.2" text-anchor="middle" font-size="16.7">224.2</text><text x="1568.5" y="295.2" text-anchor="middle" font-size="16.7">224.4</text><text x="1667.3" y="295.2" text-anchor="middle" font-size="16.7">224.6</text><text x="1766.1" y="295.2" text-anchor="middle" font-size="16.7">224.8</text><text x="1339" y="322.6" text-anchor="middle" font-size="20">Frequency (MHz)</text><text transform="translate(750.2,180.5) rotate(-90)" text-anchor="middle" font-size="20">Magnitude (dB)</text></g>
<g id="cir-chart"><rect x="1248.6" y="440.8" width="90.8" height="185.8" fill="#434343"/><rect x="1276.35" y="440.80" width="1.0" height="185.80" fill="#828282"/><rect x="1317.70" y="440.80" width="1.0" height="185.80" fill="#828282"/><rect x="1359.05" y="440.80" width="1.0" height="185.80" fill="#828282"/><rect x="1400.40" y="440.80" width="1.0" height="185.80" fill="#828282"/><rect x="1441.75" y="440.80" width="1.0" height="185.80" fill="#828282"/><rect x="1483.10" y="440.80" width="1.0" height="185.80" fill="#828282"/><rect x="1524.45" y="440.80" width="1.0" height="185.80" fill="#828282"/><rect x="1565.80" y="440.80" width="1.0" height="185.80" fill="#828282"/><rect x="1607.15" y="440.80" width="1.0" height="185.80" fill="#828282"/><rect x="1648.50" y="440.80" width="1.0" height="185.80" fill="#828282"/><rect x="1689.85" y="440.80" width="1.0" height="185.80" fill="#828282"/><rect x="1731.20" y="440.80" width="1.0" height="185.80" fill="#828282"/><rect x="1772.55" y="440.80" width="1.0" height="185.80" fill="#828282"/><rect x="1813.90" y="440.80" width="1.0" height="185.80" fill="#828282"/><rect x="1855.25" y="440.80" width="1.0" height="185.80" fill="#828282"/><rect x="1248.60" y="477.48" width="618.90" height="1.0" fill="#828282"/><rect x="1248.60" y="514.66" width="618.90" height="1.0" fill="#828282"/><rect x="1248.60" y="551.84" width="618.90" height="1.0" fill="#828282"/><rect x="1248.60" y="589.02" width="618.90" height="1.0" fill="#828282"/><line x1="1339.6" y1="441.8" x2="1339.6" y2="627.6" stroke="#f2f070" stroke-width="1.3" stroke-dasharray="1.3 1.3"/><polyline points="1250.1,582.6 1251.5,584.4 1252.9,590.7 1254.3,575.3 1255.7,596.1 1257.1,588.2 1258.5,585.6 1259.9,587.8 1261.3,596.2 1262.7,584.1 1264.1,583.5 1265.5,600.7 1266.9,584.9 1268.4,599.0 1269.8,589.6 1271.2,601.5 1272.6,581.7 1274.0,577.6 1275.4,599.4 1276.8,574.2 1278.2,588.9 1279.6,585.7 1281.0,594.7 1282.4,585.0 1283.8,583.5 1285.2,590.9 1286.6,590.7 1288.0,594.9 1289.4,593.8 1290.8,595.3 1292.2,609.3 1293.6,587.0 1295.0,592.5 1296.4,583.8 1297.8,583.6 1299.2,591.7 1300.6,583.9 1302.1,588.4 1303.5,598.1 1304.9,587.7 1306.3,596.3 1307.7,606.7 1309.1,608.8 1310.5,581.9 1311.9,593.8 1313.3,585.1 1314.7,578.6 1316.1,594.1 1317.5,594.7 1318.9,593.3 1320.3,600.6 1321.7,591.4 1323.1,589.6 1324.5,581.3 1325.9,577.9 1327.3,583.7 1328.7,600.3 1330.1,602.5 1331.5,584.3 1332.9,588.5 1334.3,583.0 1335.8,587.9 1337.2,581.8 1338.6,587.5 1340.0,598.3 1341.4,605.7 1342.8,616.8 1344.2,601.8 1345.6,595.8 1347.0,597.2 1348.4,605.6 1349.8,599.0 1351.2,595.2 1352.6,594.1 1354.0,596.6 1355.4,592.4 1356.8,590.0 1358.2,598.3 1359.6,589.7 1361.0,596.3 1362.4,580.1 1363.8,595.7 1365.2,602.0 1366.6,586.6 1368.0,571.5 1369.4,574.7 1370.9,576.9 1372.3,592.5 1373.7,592.2 1375.1,590.5 1376.5,594.0 1377.9,595.5 1379.3,590.8 1380.7,587.4 1382.1,586.9 1383.5,586.7 1384.9,591.6 1386.3,587.4 1387.7,589.7 1389.1,596.2 1390.5,586.9 1391.9,581.7 1393.3,593.1 1394.7,587.4 1396.1,595.0 1397.5,575.9 1398.9,560.4 1400.9,520.0 1401.7,544.3 1403.1,563.8 1404.6,578.7 1406.0,600.1 1407.4,598.6 1408.8,590.9 1410.2,593.2 1411.6,581.7 1413.0,590.0 1414.4,588.3 1415.8,594.7 1417.2,589.1 1418.6,596.7 1420.0,597.1 1421.4,587.6 1422.8,586.0 1424.2,591.5 1425.6,596.0 1427.0,583.3 1428.4,586.3 1429.8,594.3 1431.2,590.5 1432.6,572.9 1434.0,586.9 1435.4,584.5 1436.8,596.4 1438.2,586.0 1439.7,585.7 1441.1,584.6 1442.5,568.8 1443.9,578.1 1445.3,580.5 1446.7,581.9 1448.1,578.9 1449.5,586.2 1450.9,576.8 1452.3,596.8 1453.7,581.3 1455.1,585.7 1456.5,589.4 1457.9,593.0 1459.3,592.0 1460.7,594.3 1462.1,591.9 1463.5,584.3 1464.9,583.9 1466.3,597.6 1467.7,582.6 1469.1,594.1 1470.5,594.3 1471.9,589.6 1473.4,593.1 1474.8,598.8 1476.2,588.5 1477.6,590.4 1479.0,589.8 1480.4,591.1 1481.8,600.8 1483.2,591.2 1484.6,590.0 1486.0,610.1 1487.4,603.1 1488.8,595.4 1490.2,589.0 1491.6,599.3 1493.0,593.0 1494.4,598.3 1495.8,596.5 1497.2,595.9 1498.6,582.2 1500.0,593.9 1501.4,588.5 1502.8,591.6 1504.2,590.1 1505.6,598.3 1507.1,594.7 1508.5,586.9 1509.9,585.3 1511.3,587.0 1512.7,590.3 1514.1,585.0 1515.5,588.4 1516.9,595.4 1518.3,585.6 1519.7,595.2 1521.1,597.6 1522.5,612.4 1523.9,596.6 1525.3,594.1 1526.7,580.2 1528.1,590.8 1529.5,587.4 1530.9,577.0 1532.3,586.4 1533.7,584.0 1535.1,614.2 1536.5,584.6 1537.9,585.4 1539.3,589.3 1540.7,591.0 1542.2,591.1 1543.6,590.9 1545.0,598.5 1546.4,610.3 1547.8,596.5 1549.2,599.5 1550.6,600.4 1552.0,591.9 1553.4,591.1 1554.8,593.1 1556.2,595.5 1557.6,599.3 1559.0,599.7 1560.4,578.8 1561.8,584.3 1563.2,581.5 1564.6,577.5 1566.0,588.4 1567.4,591.9 1568.8,584.1 1570.2,590.3 1571.6,596.3 1573.0,592.7 1574.4,595.1 1575.9,594.3 1577.3,588.6 1578.7,596.0 1580.1,593.3 1581.5,596.8 1582.9,586.1 1584.3,593.4 1585.7,582.6 1587.1,588.4 1588.5,598.0 1589.9,590.3 1591.3,595.9 1592.7,598.6 1594.1,599.0 1595.5,600.8 1596.9,592.2 1598.3,586.5 1599.7,600.7 1601.1,596.0 1602.5,595.8 1603.9,581.8 1605.3,590.4 1606.7,589.4 1608.1,594.4 1609.5,594.4 1611.0,593.9 1612.4,579.7 1613.8,595.0 1615.2,582.2 1616.6,590.3 1618.0,591.0 1619.4,609.0 1620.8,592.4 1622.2,585.7 1623.6,593.7 1625.0,591.1 1626.4,603.8 1627.8,596.2 1629.2,587.1 1630.6,596.1 1632.0,601.8 1633.4,596.7 1634.8,592.8 1636.2,589.1 1637.6,588.7 1639.0,594.3 1640.4,593.8 1641.8,607.1 1643.2,599.4 1644.7,589.9 1646.1,581.3 1647.5,590.3 1648.9,583.6 1650.3,582.7 1651.7,592.2 1653.1,578.7 1654.5,584.4 1655.9,587.4 1657.3,594.2 1658.7,603.5 1660.1,588.3 1661.5,585.8 1662.9,593.2 1664.3,585.3 1665.7,594.9 1667.1,588.3 1668.5,605.8 1669.9,602.4 1671.3,596.7 1672.7,587.1 1674.1,573.3 1675.5,586.2 1676.9,587.5 1678.4,589.7 1679.8,593.6 1681.2,599.8 1682.6,587.1 1684.0,593.7 1685.4,584.9 1686.8,597.3 1688.2,595.9 1689.6,599.7 1691.0,593.8 1692.4,591.8 1693.8,578.7 1695.2,587.8 1696.6,590.0 1698.0,589.2 1699.4,596.7 1700.8,596.8 1702.2,597.3 1703.6,591.6 1705.0,587.9 1706.4,585.3 1707.8,590.8 1709.2,586.3 1710.6,593.7 1712.0,592.3 1713.5,590.4 1714.9,584.8 1716.3,593.5 1717.7,601.7 1719.1,594.2 1720.5,596.6 1721.9,586.4 1723.3,589.2 1724.7,583.4 1726.1,588.1 1727.5,588.2 1728.9,595.3 1730.3,594.2 1731.7,583.3 1733.1,587.2 1734.5,590.1 1735.9,576.9 1737.3,579.5 1738.7,574.2 1740.1,595.6 1741.5,589.0 1742.9,591.3 1744.3,589.4 1745.7,586.7 1747.2,591.2 1748.6,606.3 1750.0,592.6 1751.4,587.6 1752.8,597.7 1754.2,583.5 1755.6,582.0 1757.0,581.6 1758.4,586.3 1759.8,596.7 1761.2,592.3 1762.6,588.5 1764.0,582.7 1765.4,590.9 1766.8,595.5 1768.2,594.5 1769.6,600.4 1771.0,591.9 1772.4,585.2 1773.8,589.7 1775.2,585.7 1776.6,587.3 1778.0,599.4 1779.4,594.5 1780.8,601.3 1782.3,594.4 1783.7,596.7 1785.1,588.2 1786.5,594.5 1787.9,586.5 1789.3,597.2 1790.7,582.3 1792.1,594.2 1793.5,593.6 1794.9,589.9 1796.3,575.0 1797.7,580.4 1799.1,579.9 1800.5,581.4 1801.9,577.7 1803.3,576.8 1804.7,572.0 1806.1,585.6 1807.5,594.0 1808.9,584.8 1810.3,604.8 1811.7,591.9 1813.1,582.4 1814.5,580.8 1816.0,582.6 1817.4,582.2 1818.8,588.2 1820.2,588.0 1821.6,593.9 1823.0,592.1 1824.4,576.9 1825.8,600.0 1827.2,599.3 1828.6,596.8 1830.0,580.7 1831.4,585.1 1832.8,584.0 1834.2,573.5 1835.6,585.8 1837.0,591.4 1838.4,602.2 1839.8,592.6 1841.2,596.2 1842.6,584.8 1844.0,587.1 1845.4,600.1 1846.8,603.1 1848.2,586.3 1849.7,584.9 1851.1,584.4 1852.5,592.1 1853.9,590.0 1855.3,609.0 1856.7,597.7 1858.1,595.3 1859.5,589.3 1860.9,602.8 1862.3,599.9 1863.7,599.7 1865.1,590.0 1866.5,589.6" fill="none" stroke="#f4f4f4" stroke-width="1.45" stroke-linejoin="round"/><rect x="1247.60" y="439.65" width="620.90" height="2.1" fill="#929292"/><rect x="1247.60" y="625.05" width="620.90" height="1.9" fill="#929292"/><rect x="1866.50" y="439.70" width="2.0" height="187.30" fill="#929292"/><rect x="1247.40" y="439.70" width="2.6" height="187.30" fill="#b83232"/><circle cx="1401" cy="518.3" r="5.2" fill="#f6f020"/><circle cx="1339.5" cy="575.4" r="5.2" fill="#e01818"/><text x="1237" y="445.9" text-anchor="end" font-size="16.7">-10.0</text><text x="1237" y="483.1" text-anchor="end" font-size="16.7">-20.0</text><text x="1237" y="520.3" text-anchor="end" font-size="16.7">-30.0</text><text x="1237" y="557.4" text-anchor="end" font-size="16.7">-40.0</text><text x="1237" y="594.6" text-anchor="end" font-size="16.7">-50.0</text><text x="1237" y="631.8" text-anchor="end" font-size="16.7">-60.0</text><text x="1276.3" y="641.8" text-anchor="middle" font-size="13">-60</text><text x="1317.6" y="641.8" text-anchor="middle" font-size="13">-40</text><text x="1359.0" y="641.8" text-anchor="middle" font-size="13">-20</text><text x="1400.3" y="641.8" text-anchor="middle" font-size="13">0</text><text x="1441.7" y="641.8" text-anchor="middle" font-size="13">20</text><text x="1483.0" y="641.8" text-anchor="middle" font-size="13">40</text><text x="1524.4" y="641.8" text-anchor="middle" font-size="13">60</text><text x="1565.7" y="641.8" text-anchor="middle" font-size="13">80</text><text x="1607.1" y="641.8" text-anchor="middle" font-size="13">100</text><text x="1648.4" y="641.8" text-anchor="middle" font-size="13">120</text><text x="1689.8" y="641.8" text-anchor="middle" font-size="13">140</text><text x="1731.1" y="641.8" text-anchor="middle" font-size="13">160</text><text x="1772.5" y="641.8" text-anchor="middle" font-size="13">180</text><text x="1813.8" y="641.8" text-anchor="middle" font-size="13">200</text><text x="1855.2" y="641.8" text-anchor="middle" font-size="13">220</text><text x="1558" y="666.2" text-anchor="middle" font-size="17">Distance Difference (km)</text><text transform="translate(1177.4,534) rotate(-90)" text-anchor="middle" font-size="15.5" font-weight="bold">Magnitude (dB)</text></g>
<g id="tii-chart"><rect x="1085.10" y="732.85" width="1.0" height="177.15" fill="#8e8e8e"/><rect x="1165.60" y="732.85" width="1.0" height="177.15" fill="#8e8e8e"/><rect x="1246.10" y="732.85" width="1.0" height="177.15" fill="#8e8e8e"/><rect x="1326.60" y="732.85" width="1.0" height="177.15" fill="#8e8e8e"/><rect x="1407.10" y="732.85" width="1.0" height="177.15" fill="#8e8e8e"/><rect x="1487.60" y="732.85" width="1.0" height="177.15" fill="#8e8e8e"/><rect x="1568.10" y="732.85" width="1.0" height="177.15" fill="#8e8e8e"/><rect x="1648.60" y="732.85" width="1.0" height="177.15" fill="#8e8e8e"/><rect x="1729.10" y="732.85" width="1.0" height="177.15" fill="#8e8e8e"/><rect x="1809.60" y="732.85" width="1.0" height="177.15" fill="#8e8e8e"/><rect x="1035.00" y="874.71" width="825.00" height="1.0" fill="#8e8e8e"/><rect x="1035.00" y="839.12" width="825.00" height="1.0" fill="#8e8e8e"/><rect x="1035.00" y="803.53" width="825.00" height="1.0" fill="#8e8e8e"/><rect x="1035.00" y="767.94" width="825.00" height="1.0" fill="#8e8e8e"/><rect x="1035.00" y="906.35" width="103.73" height="1.7" fill="#b8b8b8"/><rect x="1756.97" y="906.35" width="103.03" height="1.7" fill="#b8b8b8"/><rect x="1138.73" y="907.70" width="618.24" height="1.0" fill="rgba(255,255,255,0.3)"/><line x1="1138.7" y1="734.35" x2="1138.7" y2="910.5" stroke="#e6de28" stroke-width="2" stroke-dasharray="2 2"/><line x1="1293.3" y1="734.35" x2="1293.3" y2="910.5" stroke="#e6de28" stroke-width="2" stroke-dasharray="2 2"/><line x1="1447.8" y1="734.35" x2="1447.8" y2="910.5" stroke="#e6de28" stroke-width="2" stroke-dasharray="2 2"/><line x1="1602.4" y1="734.35" x2="1602.4" y2="910.5" stroke="#e6de28" stroke-width="2" stroke-dasharray="2 2"/><line x1="1757.0" y1="734.35" x2="1757.0" y2="910.5" stroke="#e6de28" stroke-width="2" stroke-dasharray="2 2"/><rect x="1197.8" y="852.0" width="2" height="57.0" fill="#f4f4f4"/><rect x="1236.9" y="852.6" width="2" height="56.4" fill="#f4f4f4"/><rect x="1255.9" y="810.0" width="2" height="99.0" fill="#f4f4f4"/><rect x="1274.9" y="850.0" width="2" height="59.0" fill="#f4f4f4"/><rect x="1352.7" y="812.6" width="2" height="96.4" fill="#f4f4f4"/><rect x="1391.0" y="864.0" width="2" height="45.0" fill="#f4f4f4"/><rect x="1410.6" y="831.0" width="2" height="78.0" fill="#f4f4f4"/><rect x="1429.9" y="803.0" width="2" height="106.0" fill="#f4f4f4"/><rect x="1507.6" y="837.0" width="2" height="72.0" fill="#f4f4f4"/><rect x="1545.9" y="813.0" width="2" height="96.0" fill="#f4f4f4"/><rect x="1565.2" y="854.7" width="2" height="54.3" fill="#f4f4f4"/><rect x="1584.8" y="733.8" width="2" height="175.2" fill="#f4f4f4"/><rect x="1661.9" y="816.5" width="2" height="92.5" fill="#f4f4f4"/><rect x="1700.7" y="791.2" width="2" height="117.8" fill="#f4f4f4"/><rect x="1719.7" y="810.5" width="2" height="98.5" fill="#f4f4f4"/><rect x="1738.7" y="831.8" width="2" height="77.2" fill="#f4f4f4"/><rect x="1300.5" y="898.0" width="1.2" height="11.0" fill="#bdbdbd"/><rect x="1515.4" y="903.0" width="1.2" height="6.0" fill="#bdbdbd"/><rect x="1551.9" y="901.0" width="1.2" height="8.0" fill="#bdbdbd"/><rect x="1647.2" y="904.0" width="1.2" height="5.0" fill="#bdbdbd"/><rect x="1754.0" y="886.7" width="1.2" height="22.3" fill="#bdbdbd"/><rect x="1227.9" y="905.0" width="1.2" height="4.0" fill="#bdbdbd"/><rect x="1230.4" y="905.0" width="1.2" height="4.0" fill="#bdbdbd"/><rect x="1269.4" y="905.0" width="1.2" height="4.0" fill="#bdbdbd"/><rect x="1276.9" y="895.0" width="1.2" height="14.0" fill="#bdbdbd"/><rect x="1692.05" y="732.85" width="1.5" height="177.15" fill="#d42a20"/><rect x="1034.00" y="731.85" width="827.00" height="2.0" fill="#929292"/><rect x="1034.00" y="909.40" width="827.00" height="1.2" fill="#929292"/><rect x="1859.00" y="731.85" width="2.0" height="178.75" fill="#929292"/><rect x="1034.00" y="731.85" width="2.0" height="178.75" fill="#929292"/><text x="1022.2" y="916.0" text-anchor="end" font-size="16.7">0.0</text><text x="1022.2" y="880.4" text-anchor="end" font-size="16.7">0.2</text><text x="1022.2" y="844.8" text-anchor="end" font-size="16.7">0.4</text><text x="1022.2" y="809.2" text-anchor="end" font-size="16.7">0.6</text><text x="1022.2" y="773.6" text-anchor="end" font-size="16.7">0.8</text><text x="1022.2" y="738.1" text-anchor="end" font-size="16.7">1.0</text><text x="1085.8" y="929.2" text-anchor="middle" font-size="16">-900</text><text x="1166.3" y="929.2" text-anchor="middle" font-size="16">-700</text><text x="1246.8" y="929.2" text-anchor="middle" font-size="16">-500</text><text x="1327.3" y="929.2" text-anchor="middle" font-size="16">-300</text><text x="1407.8" y="929.2" text-anchor="middle" font-size="16">-100</text><text x="1488.3" y="929.2" text-anchor="middle" font-size="16">100</text><text x="1568.8" y="929.2" text-anchor="middle" font-size="16">300</text><text x="1649.3" y="929.2" text-anchor="middle" font-size="16">500</text><text x="1729.8" y="929.2" text-anchor="middle" font-size="16">700</text><text x="1810.3" y="929.2" text-anchor="middle" font-size="16">900</text><text x="1447.3" y="954.8" text-anchor="middle" font-size="16.7">TII Subcarrier</text><text transform="translate(978.4,821.5) rotate(-90)" text-anchor="middle" font-size="15.5" font-weight="bold">Magnitude</text></g>
<!-- header triangles -->
<path d="M1877 47 L1896 47 L1886.5 60 Z" fill="none" stroke="#dfe8f4" stroke-width="1.2"/>
<path d="M1877 401.8 L1896 401.8 L1886.5 415 Z" fill="none" stroke="#dfe8f4" stroke-width="1.2"/>
<path d="M1877.6 693.4 L1896 693.4 L1886.8 706.4 Z" fill="none" stroke="#dfe8f4" stroke-width="1.2"/>
<!-- toolbar icons -->
<g fill="none" stroke="#fff" stroke-width="1.7">
<rect x="1654.8" y="12.6" width="23.6" height="16.6"/><path d="M1654.8 16.8 H1678.4"/>
</g>
<g fill="#fff"><rect x="1668.6" y="13.6" width="1.6" height="1.6"/><rect x="1671.6" y="13.6" width="1.6" height="1.6"/><rect x="1674.6" y="13.6" width="1.6" height="1.6"/></g>
<g fill="none" stroke="#dcdcdc" stroke-width="1.35" stroke-linejoin="round">
<circle cx="1723" cy="12.0" r="3.3"/>
<path d="M1718.7 18.6 Q1722.6 17.6 1726.5 17.9 V29.4 Q1727.2 30.4 1728.9 30.7 V32.3 H1718.5 V30.7 Q1720.6 30.4 1721.3 29.4 V21.2 H1718.7 Z"/>
</g>
<g fill="none" stroke="#fff" stroke-width="1.75" stroke-linejoin="round">
<path id="gear" d="M1779.4 12.3 L1779.6 9.2 L1782.8 9.2 L1783.0 12.3 L1785.9 13.5 L1788.3 11.5 L1790.5 13.7 L1788.5 16.1 L1789.7 19.0 L1792.8 19.2 L1792.8 22.4 L1789.7 22.6 L1788.5 25.5 L1790.5 27.9 L1788.3 30.1 L1785.9 28.1 L1783.0 29.3 L1782.8 32.4 L1779.6 32.4 L1779.4 29.3 L1776.5 28.1 L1774.1 30.1 L1771.9 27.9 L1773.9 25.5 L1772.7 22.6 L1769.6 22.4 L1769.6 19.2 L1772.7 19.0 L1773.9 16.1 L1771.9 13.7 L1774.1 11.5 L1776.5 13.5 Z"/>
<circle cx="1781.2" cy="20.8" r="3.5"/>
</g>
<path d="M1826 8.2 L1850.4 20.4 L1826 32.5 Z" fill="#2070b8"/>
<path d="M1859.2 8.2 L1883.6 20.4 L1859.2 32.5 Z" fill="#4c7a50"/>
</svg>
<span class="t" style="left:7.00px;top:14.05px;font-size:19.5px;color:#fff;letter-spacing:-1.046px;font-style:italic;">FC0013</span>
<span class="t" style="left:922.20px;top:43.65px;font-size:18.5px;color:#fff;letter-spacing:0.178px;">Frontend</span>
<span class="t" style="left:13.80px;top:87.85px;font-size:45.5px;color:#ffff20;">0</span>
<span class="t" style="left:40.60px;top:87.85px;font-size:45.5px;color:#ffff20;">.</span>
<span class="t" style="left:57.20px;top:87.85px;font-size:45.5px;color:#ffff20;letter-spacing:-1.155px;">223</span>
<span class="t" style="left:134.80px;top:87.85px;font-size:45.5px;color:#ffff20;">.</span>
<span class="t" style="left:152.40px;top:87.85px;font-size:45.5px;color:#ffff20;letter-spacing:-1.405px;">936</span>
<span class="t" style="left:229.90px;top:87.85px;font-size:45.5px;color:#ffff20;">.</span>
<span class="t" style="left:248.60px;top:87.85px;font-size:45.5px;color:#ffff20;letter-spacing:-0.755px;">000</span>
<span class="t" style="left:330.50px;top:87.85px;font-size:45.5px;color:#ffff20;letter-spacing:-2.959px;">Hz</span>
<span class="t" style="left:12.70px;top:159.25px;font-size:18.5px;color:#e42020;letter-spacing:0.232px;">43 ppm Correction</span>
<span class="t" style="left:20.20px;top:209.00px;font-size:21px;color:#d0d0d0;letter-spacing:0.271px;">Connection</span>
<span class="t" style="left:161.00px;top:209.00px;font-size:21px;color:#d0d0d0;letter-spacing:-0.339px;">Recorder</span>
<span class="t" style="left:277.70px;top:209.00px;font-size:21px;color:#fff;letter-spacing:-1.106px;">FC0013</span>
<span class="t" style="left:20.50px;top:256.50px;font-size:22px;color:#fff;letter-spacing:-2.543px;">AGC</span>
<span class="t" style="left:159.50px;top:259.05px;font-size:20.3px;color:#fff;letter-spacing:0.353px;">On/Off</span>
<span class="t" style="left:19.50px;top:304.50px;font-size:22px;color:#fff;letter-spacing:-0.078px;">Gain</span>
<span class="t" style="left:492.10px;top:81.65px;font-size:15.5px;color:#fff;letter-spacing:-0.904px;">Freeze</span>
<span class="t" style="left:581.80px;top:81.65px;font-size:15.5px;color:#fff;letter-spacing:-0.463px;">Gradient</span>
<span class="t" style="left:477.70px;top:132.95px;font-size:15.5px;color:#fff;letter-spacing:-0.309px;">Smoothing Level</span>
<span class="t" style="left:477.70px;top:212.65px;font-size:15.5px;color:#fff;letter-spacing:-0.585px;">Zoom X</span>
<span class="t" style="left:477.70px;top:287.65px;font-size:15.5px;color:#fff;letter-spacing:-0.525px;">Zoom Y</span>
<span class="t" style="left:34.30px;top:363.80px;font-size:15.8px;color:#fff;letter-spacing:-0.835px;">12A</span>
<span class="t" style="left:138.80px;top:362.00px;font-size:20px;color:#ff6a6a;letter-spacing:-1.152px;">EId: 31E3</span>
<span class="t" style="left:243.30px;top:362.00px;font-size:20px;color:#f2f230;letter-spacing:-0.514px;">Polskie Radio</span>
<span class="t" style="left:384.70px;top:362.00px;font-size:20px;color:#fff;letter-spacing:0.013px;">2020-09-06</span>
<span class="t" style="left:498.60px;top:362.00px;font-size:20px;color:#fff;letter-spacing:-0.790px;">07:12:34</span>
<span class="t" style="left:576.00px;top:362.00px;font-size:20px;color:#fff;">Z</span>
<span class="t" style="left:1840.80px;top:362.70px;font-size:15.6px;color:#fff;letter-spacing:-0.531px;">DAB</span>
<span class="t" style="left:5.00px;top:406.00px;font-size:25px;color:#ffff20;letter-spacing:0.797px;width:209px;overflow:hidden;">No Service Select</span>
<span class="t" style="left:228.00px;top:406.00px;font-size:25px;color:#fff;letter-spacing:0.885px;">Service Quality</span>
<span class="t" style="left:7.00px;top:448.80px;font-size:20.2px;color:#fff;letter-spacing:0.051px;">Chopin</span>
<span class="t" style="left:7.00px;top:480.30px;font-size:20.2px;color:#fff;letter-spacing:-0.485px;">Polskie Radio 24</span>
<span class="t" style="left:7.00px;top:511.80px;font-size:20.2px;color:#fff;letter-spacing:-1.050px;">PR Czwórka</span>
<span class="t" style="left:7.00px;top:543.30px;font-size:20.2px;color:#fff;letter-spacing:-0.827px;">PR Dwójka</span>
<span class="t" style="left:7.00px;top:574.80px;font-size:20.2px;color:#fff;letter-spacing:-0.584px;">PR Dzieciom</span>
<span class="t" style="left:7.00px;top:606.30px;font-size:20.2px;color:#fff;letter-spacing:-1.180px;">PR Jedynka</span>
<span class="t" style="left:7.00px;top:637.80px;font-size:20.2px;color:#fff;letter-spacing:-1.095px;">PR Trójka</span>
<span class="t" style="left:7.00px;top:669.30px;font-size:20.2px;color:#fff;letter-spacing:-0.317px;">Radio Poland</span>
<span class="t" style="left:7.00px;top:700.80px;font-size:20.2px;color:#fff;letter-spacing:-0.463px;">Radio Poznan</span>
<span class="t" style="left:235.00px;top:460.85px;font-size:17.5px;color:#fff;letter-spacing:-0.720px;">SNR (dB)</span>
<span class="t" style="left:234.00px;top:499.40px;font-size:17.5px;color:#fff;letter-spacing:-0.476px;">FIC (ok %)</span>
<span class="t" style="left:234.00px;top:537.95px;font-size:17.5px;color:#fff;letter-spacing:-0.613px;">RS (ok %)</span>
<span class="t" style="left:234.00px;top:576.50px;font-size:17.5px;color:#fff;letter-spacing:0.203px;">Null Symbol</span>
<span class="t" style="left:235.00px;top:615.05px;font-size:17.5px;color:#fff;letter-spacing:-0.222px;">SymbolTime (ms)</span>
<span class="t" style="left:234.00px;top:653.60px;font-size:17.5px;color:#fff;letter-spacing:-0.255px;">FrameTime (ms)</span>
<span class="t" style="left:400.30px;top:461.95px;font-size:14.5px;color:#fff;letter-spacing:-0.196px;">6.6</span>
<span class="t" style="left:401.50px;top:500.45px;font-size:14.5px;color:#ffffd0;letter-spacing:-0.064px;">85</span>
<span class="t" style="left:396.30px;top:615.65px;font-size:14.5px;color:#fff;letter-spacing:-0.352px;">0.22</span>
<span class="t" style="left:396.30px;top:653.75px;font-size:14.5px;color:#fff;letter-spacing:-0.686px;">96.1</span>
<span class="t" style="left:479.00px;top:414.40px;font-size:21px;color:#d8d8d8;letter-spacing:-1.229px;">Sync</span>
<span class="t" style="left:556.80px;top:414.40px;font-size:21px;color:#fff;letter-spacing:-1.781px;">TII</span>
<span class="t" style="left:609.30px;top:414.40px;font-size:21px;color:#d8d8d8;letter-spacing:0.467px;">Audio</span>
<span class="t" style="left:697.60px;top:414.40px;font-size:21px;color:#d8d8d8;letter-spacing:-1.607px;">AAC</span>
<span class="t" style="left:769.20px;top:414.40px;font-size:21px;color:#d8d8d8;letter-spacing:0.488px;">Options</span>
<span class="t" style="left:471.40px;top:501.20px;font-size:18px;color:#fff;letter-spacing:0.346px;">Pattern</span>
<span class="t" style="left:555.30px;top:501.20px;font-size:18px;color:#fff;letter-spacing:0.837px;">MainId</span>
<span class="t" style="left:638.30px;top:501.20px;font-size:18px;color:#fff;letter-spacing:0.343px;">SubId</span>
<span class="t" style="left:710.80px;top:501.20px;font-size:18px;color:#fff;letter-spacing:0.438px;">Strength</span>
<span class="t" style="left:473.90px;top:537.80px;font-size:18px;color:#fff;letter-spacing:-1.040px;">0x17</span>
<span class="t" style="left:558.70px;top:537.80px;font-size:18px;color:#fff;">1</span>
<span class="t" style="left:640.70px;top:537.80px;font-size:18px;color:#fff;">2</span>
<span class="t" style="left:713.30px;top:537.80px;font-size:18px;color:#fff;letter-spacing:-1.207px;">0.77</span>
<span class="t" style="left:800.70px;top:462.40px;font-size:18px;color:#fff;letter-spacing:-0.466px;">Threshold</span>
<span class="t" style="left:818.00px;top:662.00px;font-size:18px;color:#fff;letter-spacing:-1.341px;">0.02</span>
<span class="t" style="left:1289.70px;top:397.55px;font-size:18.5px;color:#fff;letter-spacing:-0.377px;">Channel Impulse Response (CIR)</span>
<span class="t" style="left:958.40px;top:436.65px;font-size:15.5px;color:#fff;letter-spacing:-0.964px;">Freeze</span>
<span class="t" style="left:1048.20px;top:436.65px;font-size:15.5px;color:#fff;letter-spacing:-0.478px;">Gradient</span>
<span class="t" style="left:943.90px;top:487.55px;font-size:15.5px;color:#fff;letter-spacing:-0.323px;">Smoothing Level</span>
<span class="t" style="left:943.90px;top:554.65px;font-size:15.5px;color:#fff;letter-spacing:-0.565px;">Zoom X</span>
<span class="t" style="left:943.90px;top:617.45px;font-size:15.5px;color:#fff;letter-spacing:-0.505px;">Zoom Y</span>
<span class="t" style="left:1379.50px;top:690.05px;font-size:18.5px;color:#fff;letter-spacing:-0.505px;">TII Carriers</span>
</body></html>
